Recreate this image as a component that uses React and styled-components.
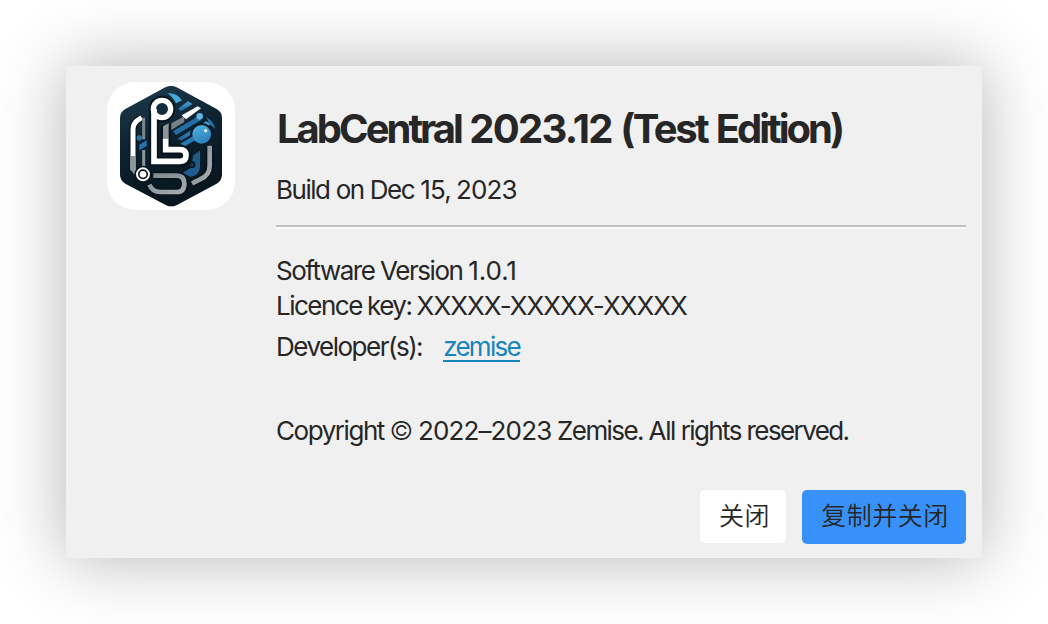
import React from "react";
import styled, { createGlobalStyle } from "styled-components";

const GlobalStyle = createGlobalStyle`
  * { box-sizing: border-box; }
  body {
    margin: 0;
    background: #fff;
    color: #262626;
    font-family: Inter, "Noto Sans CJK SC", sans-serif;
    overflow: hidden;
  }
`;

const Desktop = styled.main`
  width: 1048px;
  height: 624px;
  padding: 66px;
`;

const Dialog = styled.section`
  width: 916px;
  height: 492px;
  padding: 16px 16px 14px 41px;
  display: grid;
  grid-template-columns: 128px 690px;
  grid-template-rows: 1fr auto;
  column-gap: 41px;
  background: #f0f0f0;
  box-shadow: 0 0 66px rgba(0, 0, 0, 0.3);
`;

const AppIcon = styled.svg`
  width: 128px;
  height: 128px;
  display: block;
`;

const Details = styled.div`
  display: flex;
  flex-direction: column;
  white-space: nowrap;
`;

const Title = styled.h1`
  margin: 23px 0 0;
  padding-left: 1px;
  font-size: 40px;
  line-height: 48px;
  font-weight: 700;
  word-spacing: -1.1px;
`;

const Line = styled.p`
  margin: ${(p) => p.$gap || 0}px 0 0;
  font-size: 26px;
  line-height: 35px;
  word-spacing: ${(p) => p.$space || 0}px;
`;

const Run = styled.span`
  letter-spacing: ${(p) => p.$tracking}px;
  font-weight: ${(p) => p.$weight || "inherit"};
`;

const Divider = styled.hr`
  width: 100%;
  height: 4px;
  margin: 18px 0 0;
  border: 0;
  border-top: 2px solid #c0c0c0;
  border-bottom: 2px solid #fbfbfb;
`;

const Link = styled.a`
  display: inline-block;
  margin-left: 21px;
  line-height: 27px;
  letter-spacing: -1.7px;
  color: #1684bd;
  text-decoration: none;
  border-bottom: 2px solid #1684bd;
`;

const Actions = styled.footer`
  grid-column: 2;
  display: flex;
  justify-content: flex-end;
  align-items: flex-start;
  gap: 16px;
`;

const Button = styled.button`
  width: ${(p) => p.$width}px;
  height: ${(p) => (p.$primary ? 54 : 53)}px;
  padding: 0 0 ${(p) => (p.$primary ? 7 : 6)}px ${(p) => (p.$primary ? 2 : 3)}px;
  border: 0;
  border-radius: 5px;
  background: ${(p) => (p.$primary ? "#3891f9" : "#fff")};
  color: #262626;
  font-family: "Noto Sans CJK SC", sans-serif;
  font-size: 25px;
  font-weight: 350;
  letter-spacing: 0.5px;
  line-height: 36px;
`;

function LabLogo() {
  return (
    <AppIcon viewBox="21 18 384 384" aria-label="LabCentral">
      <defs>
        <linearGradient id="shell" x1="0" y1="0" x2="0.3" y2="1">
          <stop offset="0" stopColor="#203f52" />
          <stop offset="0.5" stopColor="#0d2230" />
          <stop offset="1" stopColor="#08151d" />
        </linearGradient>
        <linearGradient id="blue" x1="0" y1="0" x2="0" y2="1">
          <stop offset="0" stopColor="#48a6d8" />
          <stop offset="1" stopColor="#1c5f9b" />
        </linearGradient>
        <linearGradient id="ball" x1="0.3" y1="0" x2="0.7" y2="1">
          <stop offset="0" stopColor="#4fb0de" />
          <stop offset="1" stopColor="#2a7cba" />
        </linearGradient>
        <linearGradient id="steel" x1="0" y1="0" x2="1" y2="1">
          <stop offset="0" stopColor="#7e888d" />
          <stop offset="1" stopColor="#a6adb1" />
        </linearGradient>
        <clipPath id="hex">
          <path d="M196 34Q213 25 230 34L350 99Q366 108 366 126V296Q366 313 350 323L231 387Q214 396 197 387L76 323Q60 313 60 296V126Q60 108 76 99Z" />
        </clipPath>
      </defs>
      <rect x="21" y="18" width="384" height="384" rx="84" fill="#fff" />
      <g clipPath="url(#hex)" fill="none">
        <path d="M50 20H380V400H50Z" fill="url(#shell)" />
        <path d="M202 52Q229 48 246 73L228 82Q218 62 202 52Z" fill="#46aad8" />
        <path d="M234 98L264 76L278 84L243 106Z" fill="url(#blue)" />
        <path d="M214 142L253 121V138L214 162Z" fill="#798187" />
        <path d="M245 118L293 91L303 97L258 130Z" fill="#fff" />
        <path d="M220 165L292 122L304 132L228 177Z" fill="#236ea5" />
        <path d="M232 188L318 136L334 144L246 194Z" fill="url(#blue)" />
        <path d="M319 124Q339 134 346 158L328 144Z" fill="#2a70a6" />
        <circle cx="299" cy="121" r="10" fill="#62b6dc" />
        <path d="M280 238L300 224V275Q297 300 270 302L248 290L272 276Z" fill="#205b8d" />
        <circle cx="276" cy="266" r="8" fill="#173750" stroke="#08151d" strokeWidth="4" />
        <circle cx="305" cy="176" r="35" fill="#0a1c28" />
        <path d="M252 204L304 174" stroke="#0a1c28" strokeWidth="26" />
        <path d="M246 208L304 174" stroke="#2876b2" strokeWidth="14" />
        <circle cx="305" cy="175" r="28" fill="url(#ball)" />
        <circle cx="317" cy="164" r="5" fill="#d8f4ff" />
        <path d="M99 283V160Q99 145 111 134L125 125" stroke="#08151d" strokeWidth="22" />
        <path d="M99 283V160Q99 145 111 134L125 125" stroke="#fff" strokeWidth="15" />
        <path d="M99 240V270Q99 283 112 293" stroke="#8d969b" strokeWidth="15" />
        <path d="M131 125V190" stroke="#7c858a" strokeWidth="9" />
        <path d="M131 222V272" stroke="#8d969b" strokeWidth="9" />
        <path d="M118 206L140 193V210L118 223Z" fill="#2474ad" />
        <circle cx="118" cy="186" r="8" fill="#2876a8" />
        <path d="M329 214V269Q329 298 300 310L276 322" stroke="#06131b" strokeWidth="24" />
        <path d="M329 209V269Q329 298 300 310L276 322" stroke="url(#steel)" strokeWidth="14" />
        <path d="M160 299H230Q253 299 253 323Q253 348 229 348H181Q157 348 148 326" stroke="#07151d" strokeWidth="24" />
        <path d="M160 299H230Q253 299 253 323Q253 348 229 348H181Q157 348 148 326" stroke="url(#steel)" strokeWidth="14" />
        <path d="M162 98V256H240Q258 256 258 238Q258 221 240 221H197V148" stroke="#07151d" strokeWidth="30" />
        <circle cx="186" cy="99" r="26" stroke="#07151d" strokeWidth="28" />
        <circle cx="186" cy="99" r="26" fill="#132b3a" stroke="#fff" strokeWidth="16" />
        <path d="M162 98V256H240Q258 256 258 238Q258 221 240 221H197V187" stroke="#fff" strokeWidth="17" />
        <path d="M189 151L206 142V188H189Z" fill="#8b959b" />
        <circle cx="129" cy="295" r="26" fill="#07151d" />
        <circle cx="129" cy="295" r="18" stroke="#fff" strokeWidth="6" />
        <circle cx="129" cy="295" r="10" fill="#fff" />
      </g>
    </AppIcon>
  );
}

export default function App() {
  return (
    <>
      <GlobalStyle />
      <Desktop>
        <Dialog>
          <LabLogo />
          <Details>
            <Title>
              <Run $tracking={-3}>LabCentral</Run> <Run $tracking={-1.7}>2023.12</Run>{" "}
              <Run $tracking={-2.5}>(Test</Run> <Run $tracking={-3}>Edition)</Run>
            </Title>
            <Line $gap={19} $space={-1.1}>
              <Run $tracking={-1.5}>Build</Run> <Run $tracking={-1.5}>on</Run>{" "}
              <Run $tracking={-1.5}>Dec</Run> <Run $tracking={-0.9}>15, 2023</Run>
            </Line>
            <Divider />
            <Line $gap={24} $space={-1.5}>
              <Run $tracking={-1.5}>Software</Run> <Run $tracking={-1.45}>Version</Run>{" "}
              <Run $tracking={-0.1}>1.0.1</Run>
            </Line>
            <Line $space={-2.2}>
              <Run $tracking={-1.5}>Licence</Run> <Run $tracking={-1.5}>key:</Run>{" "}
              <Run $tracking={-0.95}>XXXXX-XXXXX-XXXXX</Run>
            </Line>
            <Line $gap={6}>
              <Run $tracking={-1.5}>Developer(s):</Run>
              <Link>zemise</Link>
            </Line>
            <Line $gap={49} $space={-1.6}>
              <Run $tracking={-1.45}>Copyright</Run> <Run $tracking={-1.2} $weight={300}>©</Run>{" "}
              <Run $tracking={-0.85}>2022–2023</Run> <Run $tracking={-1.6}>Zemise.</Run>{" "}
              <Run $tracking={-1.4}>All</Run> <Run $tracking={-1.6}>rights</Run>{" "}
              <Run $tracking={-1.6}>reserved.</Run>
            </Line>
          </Details>
          <Actions>
            <Button $width={86}>关闭</Button>
            <Button $primary $width={164}>复制并关闭</Button>
          </Actions>
        </Dialog>
      </Desktop>
    </>
  );
}
